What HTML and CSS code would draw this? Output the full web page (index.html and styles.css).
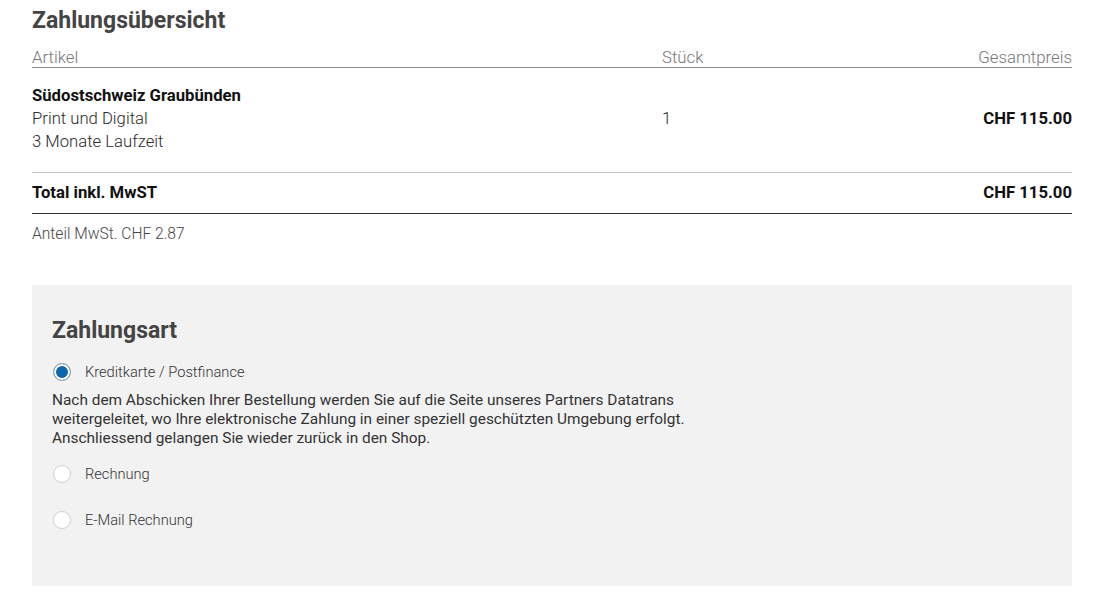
FILE: index.html
```html
<!DOCTYPE html>
<html lang="de">
<head>
<meta charset="utf-8">
<link rel="stylesheet" href="styles.css">
</head>
<body>
<div class="page">
  <h1 class="title">Zahlungsübersicht</h1>
  <div class="row head">
    <div>Artikel</div>
    <div>Stück</div>
    <div class="right">Gesamtpreis</div>
  </div>
  <div class="row item">
    <div>
      <div class="name">Südostschweiz Graubünden</div>
      <div>Print und Digital</div>
      <div>3 Monate Laufzeit</div>
    </div>
    <div>1</div>
    <div class="right strong">CHF 115.00</div>
  </div>
  <div class="row total">
    <div class="strong">Total inkl. MwST</div>
    <div></div>
    <div class="right strong">CHF 115.00</div>
  </div>
  <div class="vat">Anteil MwSt. CHF 2.87</div>

  <section class="payment">
    <h2 class="ptitle">Zahlungsart</h2>
    <label class="option">
      <span class="radio checked"></span>
      <span>Kreditkarte / Postfinance</span>
    </label>
    <p class="info">Nach dem Abschicken Ihrer Bestellung werden Sie auf die Seite unseres Partners Datatrans<br>weitergeleitet, wo Ihre elektronische Zahlung in einer speziell geschützten Umgebung erfolgt.<br>Anschliessend gelangen Sie wieder zurück in den Shop.</p>
    <label class="option">
      <span class="radio"></span>
      <span>Rechnung</span>
    </label>
    <label class="option last">
      <span class="radio"></span>
      <span>E-Mail Rechnung</span>
    </label>
  </section>
</div>
</body>
</html>
```
FILE: styles.css
```css
* { box-sizing: border-box; }
html, body { margin: 0; padding: 0; background: #fff; }
body {
  font-family: Roboto, "Liberation Sans", sans-serif;
  color: #222;
}
.page {
  width: 1040px;
  margin-left: 32px;
}
.title {
  margin: 0;
  padding-top: 8px;
  font-size: 23px;
  line-height: 26px;
  font-weight: 700;
  color: #444;
}
.row {
  display: grid;
  grid-template-columns: 630px 1fr auto;
  align-items: center;
}
.right { text-align: right; }
.strong { font-weight: 700; color: #111; }
.head {
  margin-top: 13px;
  font-size: 16.8px;
  line-height: 20px;
  font-weight: 300;
  color: #777;
  padding-bottom: 0;
  border-bottom: 1px solid #8a8a8a;
}
.item {
  padding: 16px 0 19px;
  font-size: 16.7px;
  line-height: 23px;
  font-weight: 300;
  color: #2a2a2a;
  border-bottom: 1px solid #c8c8c8;
}
.item .name { font-weight: 700; color: #111; }
.total {
  font-size: 16.7px;
  line-height: 22px;
  padding: 9px 0;
  border-bottom: 1px solid #333;
}
.vat {
  padding-top: 10px;
  font-size: 15.6px;
  line-height: 20px;
  font-weight: 300;
  color: #444;
}
.payment {
  margin-top: 41px;
  background: #f2f2f2;
  padding: 33px 20px 56px;
}
.ptitle {
  margin: 0;
  font-size: 23px;
  line-height: 26px;
  font-weight: 700;
  color: #444;
}
.option {
  display: flex;
  align-items: center;
  gap: 14px;
  font-size: 14.65px;
  line-height: 20px;
  font-weight: 300;
  color: #333;
  margin-top: 18px;
  margin-left: 1px;
}
.option + .option { margin-top: 26px; }
.radio {
  width: 18px;
  height: 18px;
  border-radius: 50%;
  background: #fff;
  border: 1px solid #cfcfcf;
  flex: none;
}
.radio.checked {
  background: #0b68ad;
  border: 1px solid #9aa8b4;
  box-shadow: inset 0 0 0 2px #fff;
}
.info {
  margin: 9px 0 0;
  font-size: 15.4px;
  line-height: 19px;
  font-weight: 400;
  color: #333;
}
.info + .option { margin-top: 16px; }
```
